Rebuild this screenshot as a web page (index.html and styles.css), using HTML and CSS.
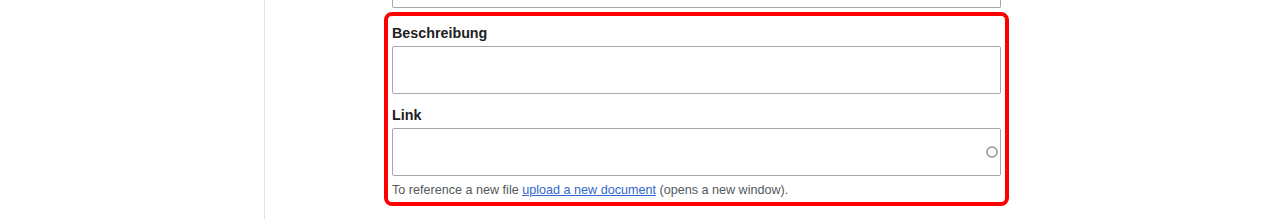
FILE: index.html
```html
<!DOCTYPE html>
<html lang="de">
<head>
<meta charset="utf-8">
<title>Form</title>
<link rel="stylesheet" href="styles.css">
</head>
<body>
<div class="page">
  <div class="sidebar"></div>
  <div class="main">
    <div class="prev-input"></div>
    <div class="highlight">
      <div class="field">
        <label class="label" for="desc">Beschreibung</label>
        <input class="input" id="desc" type="text">
      </div>
      <div class="field field-next">
        <label class="label" for="link">Link</label>
        <div class="input-wrap">
          <input class="input" id="link" type="text">
          <span class="spinner"></span>
        </div>
        <div class="help">To reference a new file <a href="#">upload a new document</a> (opens a new window).</div>
      </div>
    </div>
  </div>
</div>
</body>
</html>
```
FILE: styles.css
```css
html, body {
  margin: 0;
  padding: 0;
  background: #fff;
  font-family: "Liberation Sans", Arial, sans-serif;
  color: #202122;
}
.page {
  display: flex;
  height: 219px;
  overflow: hidden;
}
.sidebar {
  width: 264px;
  flex: none;
  border-right: 1px solid #dde3ea;
}
.main {
  padding-left: 127px;
  width: 609px;
}
.prev-input {
  height: 8px;
  box-sizing: border-box;
  border: 1px solid #a2a9b1;
  border-top: none;
  border-radius: 0 0 2px 2px;
}
.highlight {
  margin: 4px 0 0 -8px;
  border: 4px solid #ff0000;
  border-radius: 8px;
  padding: 4px;
  width: 609px;
}
.field-next {
  margin-top: 8px;
}
.label {
  display: block;
  font-size: 14.3px;
  font-weight: bold;
  line-height: 24px;
  padding-top: 1px;
  margin-bottom: 1px;
}
.input {
  display: block;
  box-sizing: border-box;
  width: 609px;
  height: 48px;
  margin: 0;
  border: 1px solid #a2a9b1;
  border-radius: 2px;
  background: #fff;
  font: inherit;
}
.input-wrap {
  position: relative;
}
.spinner {
  position: absolute;
  right: 3px;
  top: 18px;
  width: 8px;
  height: 8px;
  border: 2px solid #a9a9a9;
  border-radius: 50%;
}
.help {
  margin-top: 6px;
  font-size: 12.6px;
  line-height: 16px;
  color: #54595d;
}
.help a {
  color: #3366cc;
  text-decoration: underline;
}
```
